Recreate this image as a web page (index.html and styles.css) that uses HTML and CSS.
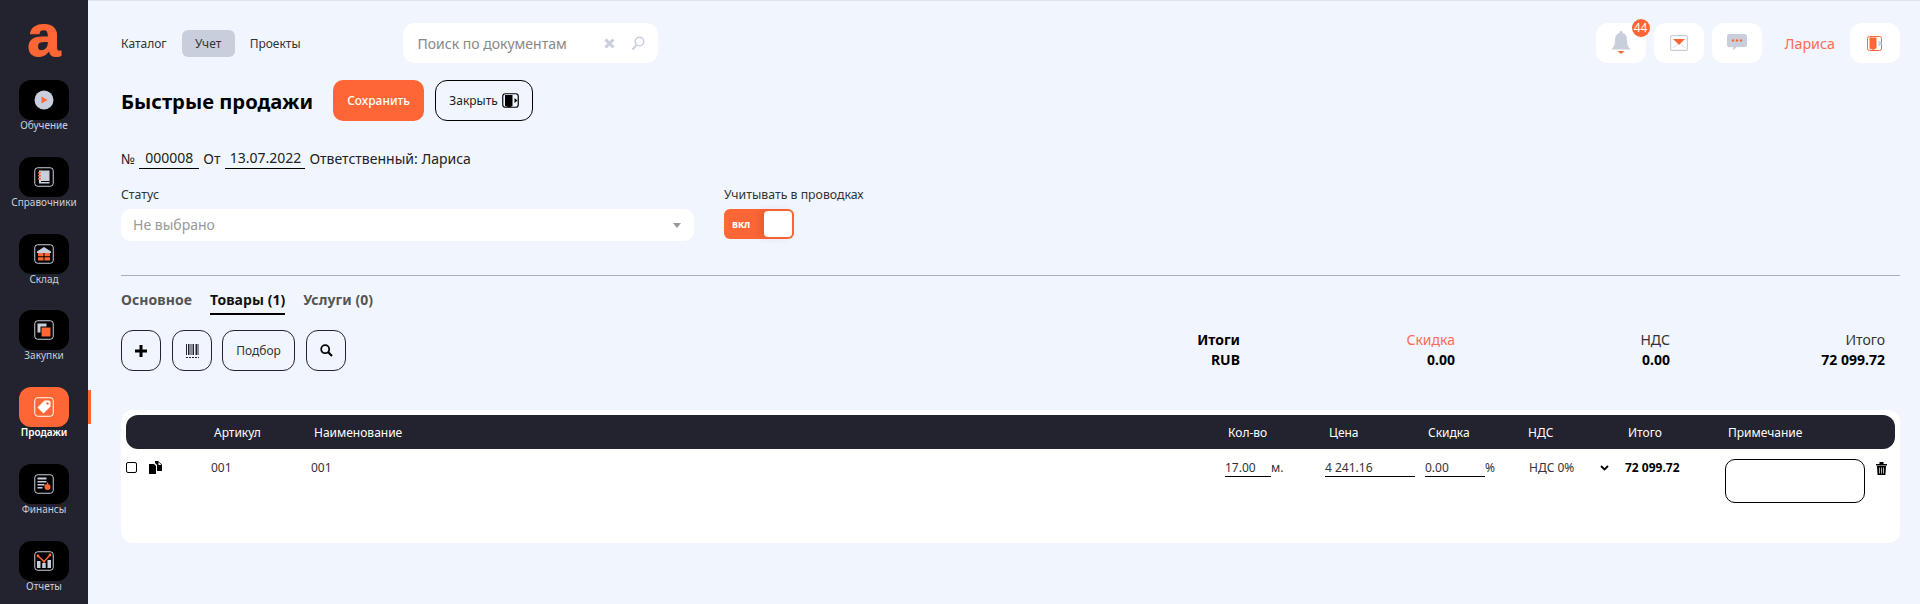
FILE: index.html
```html
<!DOCTYPE html>
<html lang="en">
<head>
    <meta charset="UTF-8">
    <meta name="viewport" content="width=device-width, initial-scale=1.0">
    <title>Быстрые продажи</title>
    <link rel="stylesheet" href="styles.css">
</head>
<body>
    <!-- Sidebar -->
    <aside class="sidebar">
        <div class="logo">a</div>

        <div class="side-item">
            <div class="side-icon">
                <svg width="20" height="20" viewBox="0 0 20 20"><circle cx="10" cy="10" r="9.5" fill="#c9cedd"/><path d="M7.5 6.5 13.5 10 7.5 13.5Z" fill="#ff6635"/></svg>
            </div>
            <span>Обучение</span>
        </div>
        <div class="side-item">
            <div class="side-icon">
                <svg width="20" height="20" viewBox="0 0 20 20"><rect x=".75" y=".75" width="18.5" height="18.5" rx="3" fill="none" stroke="#c9cedd" stroke-width="1"/><path d="M5 3.5h10.5v13H5Z" fill="#c9cedd"/><path d="M7 14h8.5v1H7Z" fill="#000"/><path d="M4 5h3v1.5H4ZM4 8h3v1.5H4ZM4 11h3v1.5H4Z" fill="#ff6635"/></svg>
            </div>
            <span>Справочники</span>
        </div>
        <div class="side-item">
            <div class="side-icon">
                <svg width="20" height="20" viewBox="0 0 20 20"><rect x=".75" y=".75" width="18.5" height="18.5" rx="3" fill="none" stroke="#c9cedd" stroke-width="1"/><path d="M3 7.5 10 3l7 4.5V9H3Z" fill="#c9cedd"/><path d="M4 9h12v7.5H4Z" fill="#ff6635"/><path d="M9.5 9h1v7.5h-1ZM4 12.3h12v1H4Z" fill="#000"/></svg>
            </div>
            <span>Склад</span>
        </div>
        <div class="side-item">
            <div class="side-icon">
                <svg width="20" height="20" viewBox="0 0 20 20"><rect x=".75" y=".75" width="18.5" height="18.5" rx="3" fill="none" stroke="#c9cedd" stroke-width="1"/><path d="M3.5 3.5h9v3h-6v6h-3Z" fill="#c9cedd"/><path d="M7.5 7.5h9v9h-9Z" fill="#ff6635"/></svg>
            </div>
            <span>Закупки</span>
        </div>
        <div class="side-item active">
            <div class="side-icon">
                <svg width="20" height="20" viewBox="0 0 20 20"><rect x=".75" y=".75" width="18.5" height="18.5" rx="3" fill="none" stroke="#fff" stroke-width="1"/><path d="M10.5 3.5h4.5a1.5 1.5 0 0 1 1.5 1.500V9.500L9.500 16.500 3.500 10.500Z" fill="#fff"/><circle cx="13.500" cy="6.500" r="1.200" fill="#ff6635"/></svg>
            </div>
            <span>Продажи</span>
        </div>
        <div class="side-item">
            <div class="side-icon">
                <svg width="20" height="20" viewBox="0 0 20 20"><rect x=".75" y=".75" width="18.5" height="18.5" rx="3" fill="none" stroke="#c9cedd" stroke-width="1"/><path d="M3.500 3.500h9v2h-9ZM3.500 7h9v1.500h-9ZM3.500 10h7v1.500h-7ZM3.500 13h5v1.500h-5Z" fill="#c9cedd"/><circle cx="13.500" cy="13" r="3" fill="#ff6635"/><path d="M13 8.500h1.200v1.500H13Z" fill="#ff6635"/></svg>
            </div>
            <span>Финансы</span>
        </div>
        <div class="side-item">
            <div class="side-icon">
                <svg width="20" height="20" viewBox="0 0 20 20"><rect x=".75" y=".75" width="18.5" height="18.5" rx="3" fill="none" stroke="#c9cedd" stroke-width="1"/><path d="M3 10h3.500v7H3ZM8.200 12h3.500v5H8.200ZM13.500 9h3.500v8h-3.500Z" fill="#c9cedd"/><path d="M4 5 10 10.500 16 4" fill="none" stroke="#ff6635" stroke-width="1.400"/><circle cx="4" cy="5" r="1.400" fill="#ff6635"/><circle cx="10" cy="10.500" r="1.200" fill="#ff6635"/><circle cx="16" cy="4" r="1.400" fill="#ff6635"/></svg>
            </div>
            <span>Отчеты</span>
        </div>
    </aside>

    <main class="main">
        <!-- Top bar -->
        <header class="topbar">
            <nav class="nav">
                <span>Каталог</span>
                <span class="nav-current">Учет</span>
                <span>Проекты</span>
            </nav>
            <div class="search">
                <input type="text" placeholder="Поиск по документам">
                <svg width="11" height="11" viewBox="0 0 11 11"><path d="M1.500 1.500 9.500 9.500M9.500 1.500 1.500 9.500" stroke="#c9cedd" stroke-width="3"/></svg>
                <svg width="14" height="15" viewBox="0 0 14 15"><circle cx="8.500" cy="5.500" r="4.300" fill="none" stroke="#c9cedd" stroke-width="1.600"/><path d="M5.500 9 1.500 13.500" stroke="#c9cedd" stroke-width="2"/></svg>
            </div>
            <div class="top-right">
                <div class="top-btn">
                    <svg width="20" height="24" viewBox="0 0 20 24"><path d="M10 0a1.500 1.500 0 0 1 1.500 2C15 3 16 6 16 9.500c0 4 1 6.500 3.500 9H.5C3 16 4 13.500 4 9.500 4 6 5 3 8.500 2A1.500 1.500 0 0 1 10 0Z" fill="#c9cedd"/><path d="M6.500 20h7L10 23Z" fill="#ff6635"/></svg>
                    <span class="badge">44</span>
                </div>
                <div class="top-btn">
                    <svg width="18" height="16" viewBox="0 0 18 16"><rect x=".6" y=".6" width="16.800" height="14.800" rx="1.500" fill="none" stroke="#c9cedd" stroke-width="1.200"/><path d="M3 4h12L9 10Z" fill="#ff6635"/><path d="M3 13l4.500-4M15 13l-4.500-4" fill="none" stroke="#d5d9e5"/></svg>
                </div>
                <div class="top-btn">
                    <svg width="20" height="18" viewBox="0 0 20 18"><path d="M2.500 0h15A2.500 2.500 0 0 1 20 2.500v8a2.500 2.500 0 0 1-2.500 2.500H9.500L6.500 16.500 6 13H2.500A2.500 2.500 0 0 1 0 10.500v-8A2.500 2.500 0 0 1 2.500 0Z" fill="#c9cedd"/><circle cx="6" cy="6.500" r="1.200" fill="#ff6635"/><circle cx="10" cy="6.500" r="1.200" fill="#ff6635"/><circle cx="14" cy="6.500" r="1.200" fill="#ff6635"/></svg>
                </div>
                <span class="user-name">Лариса</span>
                <div class="top-btn">
                    <svg width="16" height="15" viewBox="0 0 16 15"><rect x=".5" y=".5" width="14" height="14" rx="2" fill="none" stroke="#ff6635"/><path d="M2.500 1.500h7v10.500l-3 2-4-1.500Z" fill="#ff6635"/><path d="M11.500 4.500 15.500 7.500 11.500 10.500Z" fill="#c9cedd"/></svg>
                </div>
            </div>
        </header>

        <!-- Title -->
        <div class="title-row">
            <h1>Быстрые продажи</h1>
            <button class="btn-save">Сохранить</button>
            <button class="btn-close">Закрыть
                <svg width="17" height="15" viewBox="0 0 17 15"><rect x=".75" y=".75" width="15.500" height="13.500" rx="2.500" fill="none" stroke="#000" stroke-width="1.200"/><path d="M3 2h7.500v11l-3 1.500L3 13Z" fill="#000"/><path d="M12.500 5 15.500 7.500 12.500 10Z" fill="#000"/></svg>
            </button>
        </div>

        <!-- Document info -->
        <div class="doc-row">
            <span>№</span>
            <span class="doc-field doc-number">000008</span>
            <span class="doc-from">От</span>
            <span class="doc-field doc-date">13.07.2022</span>
            <span>Ответственный: Лариса</span>
        </div>

        <div class="form-row">
            <div class="form-status">
                <label>Статус</label>
                <div class="select">Не выбрано</div>
            </div>
            <div class="form-switch">
                <label>Учитывать в проводках</label>
                <div class="switch"><span>вкл</span><i></i></div>
            </div>
        </div>

        <hr class="divider">

        <!-- Tabs -->
        <div class="tabs">
            <span>Основное</span>
            <span class="tab-current">Товары (1)</span>
            <span>Услуги (0)</span>
        </div>

        <!-- Toolbar and totals -->
        <div class="toolbar">
            <button class="tool-btn">
                <svg width="12" height="12" viewBox="0 0 12 12"><path d="M6 0v12M0 6h12" stroke="#000" stroke-width="3"/></svg>
            </button>
            <button class="tool-btn">
                <svg width="13" height="14" viewBox="0 0 13 14"><path d="M.5 0v11M3 0v11M5 0v11M7.500 0v11M10 0v11M12 0v11" stroke="#22232e" stroke-width="1"/><path d="M2.500 0v11M10.500 0v11M7 0v11" stroke="#22232e" stroke-width="1"/><path d="M0 13.500h13" stroke="#22232e" stroke-dasharray="2 1"/></svg>
            </button>
            <button class="tool-btn tool-text">Подбор</button>
            <button class="tool-btn">
                <svg width="13" height="13" viewBox="0 0 13 13"><circle cx="5.200" cy="5.200" r="4" fill="none" stroke="#000" stroke-width="1.800"/><path d="M8 8 12 12" stroke="#000" stroke-width="2.200"/></svg>
            </button>

            <div class="totals">
                <div class="total">
                    <b>Итоги</b>
                    <b>RUB</b>
                </div>
                <div class="total">
                    <span class="total-discount">Скидка</span>
                    <b>0.00</b>
                </div>
                <div class="total">
                    <span>НДС</span>
                    <b>0.00</b>
                </div>
                <div class="total">
                    <span>Итого</span>
                    <b>72 099.72</b>
                </div>
            </div>
        </div>

        <!-- Goods table -->
        <div class="table-card">
            <div class="table-head">
                <span></span>
                <span>Артикул</span>
                <span>Наименование</span>
                <span>Кол-во</span>
                <span>Цена</span>
                <span>Скидка</span>
                <span>НДС</span>
                <span>Итого</span>
                <span>Примечание</span>
            </div>
            <div class="table-row">
                <input type="checkbox" class="row-check">
                <svg class="row-doc" width="13" height="13" viewBox="0 0 13 13"><path d="M0 3h5l2 2v8H0Z" fill="#000"/><path d="M6 0h3l4 3.500V10H8V4L6 2Z" fill="#000"/><path d="M9.500 1v3h3" fill="#fff"/></svg>
                <span>001</span>
                <span>001</span>
                <div class="cell-input"><span class="underline qty">17.00</span><span>м.</span></div>
                <div class="cell-input"><span class="underline price">4 241.16</span></div>
                <div class="cell-input"><span class="underline discount">0.00</span><span>%</span></div>
                <div class="cell-vat">
                    <span>НДС 0%</span>
                    <svg width="9" height="6" viewBox="0 0 9 6"><path d="M1 1 4.500 4.500 8 1" fill="none" stroke="#000" stroke-width="1.800"/></svg>
                </div>
                <b>72 099.72</b>
                <textarea class="note"></textarea>
                <svg class="trash" width="11" height="13" viewBox="0 0 11 13"><path d="M0 2h11v1.500H0ZM3.500 0h4v2h-4Z" fill="#000"/><path d="M1 4h9l-.6 9H1.600Z" fill="#000"/><path d="M3.500 5.500v6M5.500 5.500v6M7.500 5.500v6" stroke="#fff" stroke-width=".7"/></svg>
            </div>
        </div>
    </main>
</body>
</html>
```

FILE: styles.css
```css
* {
    box-sizing: border-box;
}

body {
    font-family: "Noto Sans", "Open Sans", sans-serif;
    margin: 0;
    padding: 0;
    height: 604px;
    overflow: hidden;
    display: flex;
    background-color: #f1f6fe;
    color: #222;
}

/* Sidebar */
.sidebar {
    width: 88px;
    flex-shrink: 0;
    background-color: #22232e;
    height: 604px;
}

.logo {
    height: 80px;
    color: #ff6635;
    font-family: "Liberation Sans", sans-serif;
    font-size: 60px;
    font-weight: 700;
    line-height: 72px;
    text-align: center;
    -webkit-text-stroke: 1px #ff6635;
}

.side-item {
    position: relative;
    height: 76.8px;
    display: flex;
    flex-direction: column;
    align-items: center;
    font-size: 10px;
    line-height: 14px;
    color: #c9cedd;
}

.side-icon {
    width: 50px;
    height: 40px;
    border-radius: 12px;
    background-color: #000;
    display: flex;
    align-items: center;
    justify-content: center;
    margin-bottom: -2px;
}

.side-item.active {
    color: #fff;
    font-weight: 600;
}

.side-item.active .side-icon {
    background-color: #ff6635;
}

.side-item.active::after {
    content: "";
    position: absolute;
    right: -3px;
    top: 3px;
    width: 3px;
    height: 34px;
    background-color: #ff6635;
}

/* Main */
.main {
    flex: 1;
    min-width: 0;
    border-top: 1px solid #dde3ea;
    padding: 22px 20px 0 33px;
}

.topbar {
    display: flex;
    align-items: center;
    height: 40px;
}

.nav {
    display: flex;
    align-items: center;
    gap: 15px;
    font-size: 12px;
    color: #333;
}

.nav-current {
    width: 53px;
    height: 27px;
    line-height: 27px;
    text-align: center;
    border-radius: 6px;
    background-color: #c9cedd;
}

.search {
    width: 255px;
    height: 40px;
    margin-left: 102px;
    padding: 0 13px 0 15px;
    display: flex;
    align-items: center;
    gap: 16px;
    background-color: #fff;
    border-radius: 12px;
}

.search input {
    flex: 1;
    min-width: 0;
    border: none;
    outline: none;
    padding: 0;
    font-family: inherit;
    font-size: 14px;
}

.search input::placeholder {
    color: #888;
}

.top-right {
    margin-left: auto;
    display: flex;
    align-items: center;
    gap: 8px;
}

.top-btn {
    position: relative;
    width: 50px;
    height: 40px;
    border-radius: 12px;
    background-color: #fff;
    display: flex;
    align-items: center;
    justify-content: center;
}

.badge {
    position: absolute;
    top: -4px;
    right: -4px;
    width: 18px;
    height: 18px;
    line-height: 18px;
    border-radius: 50%;
    background-color: #ff6635;
    color: #fff;
    font-size: 12px;
    text-align: center;
}

.user-name {
    margin: 0 7px 0 15px;
    font-size: 14.3px;
    color: #ff6b55;
}

/* Title */
.title-row {
    display: flex;
    align-items: center;
    margin-top: 17px;
}

h1 {
    margin: 0 20px 0 0;
    font-size: 20.2px;
    font-weight: 700;
    color: #000;
}

button {
    font-family: inherit;
    cursor: pointer;
}

.btn-save {
    width: 91px;
    height: 41px;
    border: none;
    border-radius: 10px;
    background-color: #ff6635;
    color: #fff;
    font-size: 12px;
    font-weight: 500;
}

.btn-close {
    width: 98px;
    height: 41px;
    margin-left: 11px;
    padding: 0;
    border: 1px solid #000;
    border-radius: 12px;
    background-color: transparent;
    font-size: 12px;
    color: #222;
    display: flex;
    align-items: center;
    justify-content: center;
    gap: 4px;
}

/* Document info */
.doc-row {
    display: flex;
    align-items: center;
    height: 21px;
    margin-top: 27px;
    font-size: 14px;
    color: #222;
}

.doc-field {
    height: 21px;
    line-height: 20px;
    border-bottom: 1px solid #000;
    text-align: center;
}

.doc-number {
    width: 60px;
    margin-left: 4px;
}

.doc-from {
    margin: 0 5px 0 4px;
}

.doc-date {
    width: 80px;
    margin-right: 4px;
}

.form-row {
    display: flex;
    margin-top: 17px;
    font-size: 12.3px;
}

.form-row label {
    display: block;
    height: 23px;
    color: #333;
}

.form-status {
    width: 573px;
    margin-right: 30px;
}

.select {
    position: relative;
    height: 32px;
    line-height: 32px;
    padding-left: 12px;
    border-radius: 10px;
    background-color: #fff;
    color: #999;
    font-size: 14px;
}

.select::after {
    content: "";
    position: absolute;
    right: 13px;
    top: 14px;
    border-left: 4px solid transparent;
    border-right: 4px solid transparent;
    border-top: 5px solid #999;
}

.switch {
    position: relative;
    width: 70px;
    height: 30px;
    border-radius: 6px;
    background-color: #ff6635;
    color: #fff;
    font-size: 10px;
    font-weight: 700;
    line-height: 30px;
    padding-left: 8px;
}

.switch i {
    position: absolute;
    right: 2px;
    top: 2px;
    width: 28px;
    height: 26px;
    border-radius: 4px;
    background-color: #fff;
    box-shadow: -4px 0 8px rgba(0, 0, 0, 0.12);
}

.divider {
    margin: 34px 0 0;
    border: none;
    border-top: 1px solid #a9adb8;
}

/* Tabs */
.tabs {
    display: flex;
    gap: 18px;
    height: 39px;
    padding-top: 14px;
    font-size: 14px;
    font-weight: 700;
    letter-spacing: 0.05px;
    color: #555;
    line-height: 20px;
}

.tabs span {
    height: 25px;
}

.tab-current {
    color: #111;
    border-bottom: 2px solid #000;
}

/* Toolbar */
.toolbar {
    display: flex;
    align-items: flex-start;
    gap: 11px;
    height: 41px;
    margin-top: 15px;
}

.tool-btn {
    width: 40px;
    height: 41px;
    padding: 0;
    border: 1px solid #22232e;
    border-radius: 12px;
    background-color: transparent;
    display: flex;
    align-items: center;
    justify-content: center;
}

.tool-text {
    width: 73px;
    margin-left: -1px;
    font-size: 12px;
    color: #333;
}

.totals {
    margin-left: auto;
    padding-right: 15px;
    display: grid;
    grid-template-columns: repeat(4, 215px);
    font-size: 14px;
    line-height: 20px;
    color: #333;
}

.total {
    display: flex;
    flex-direction: column;
    align-items: flex-end;
}

.total b {
    color: #000;
}

.total-discount {
    color: #ff6b55;
}

/* Table */
.table-card {
    height: 133px;
    margin-top: 39px;
    padding: 5px;
    border-radius: 12px;
    background-color: #fff;
}

.table-head {
    height: 34px;
    display: grid;
    grid-template-columns: 88px 100px 914px 101px 99px 100px 100px 100px 1fr;
    align-items: center;
    border-radius: 12px;
    background-color: #22232e;
    color: #fff;
    font-size: 12px;
}

.table-row {
    display: grid;
    grid-template-columns: 23px 62px 100px 914px 100px 100px 104px 96px 100px 140px 1fr;
    align-items: start;
    padding-top: 10px;
    font-size: 12px;
    line-height: 17px;
    color: #333;
}

.row-check {
    appearance: none;
    width: 11px;
    height: 11px;
    margin: 3px 0 0;
    border: 1.500px solid #000;
    border-radius: 2px;
    background-color: #fff;
}

.row-doc {
    margin-top: 2px;
}

.cell-input {
    display: flex;
    align-items: flex-start;
}

.underline {
    height: 18px;
    border-bottom: 1px solid #000;
}

.qty {
    width: 46px;
}

.price {
    width: 90px;
}

.discount {
    width: 60px;
}

.cell-vat {
    display: flex;
    align-items: center;
    justify-content: space-between;
    padding-right: 16px;
}

.table-row b {
    color: #000;
}

.note {
    width: 140px;
    height: 44px;
    padding: 4px;
    border: 1px solid #000;
    border-radius: 10px;
    resize: none;
    margin: 0;
    font-family: inherit;
}

.trash {
    margin: 3px 0 0 11px;
}
```
